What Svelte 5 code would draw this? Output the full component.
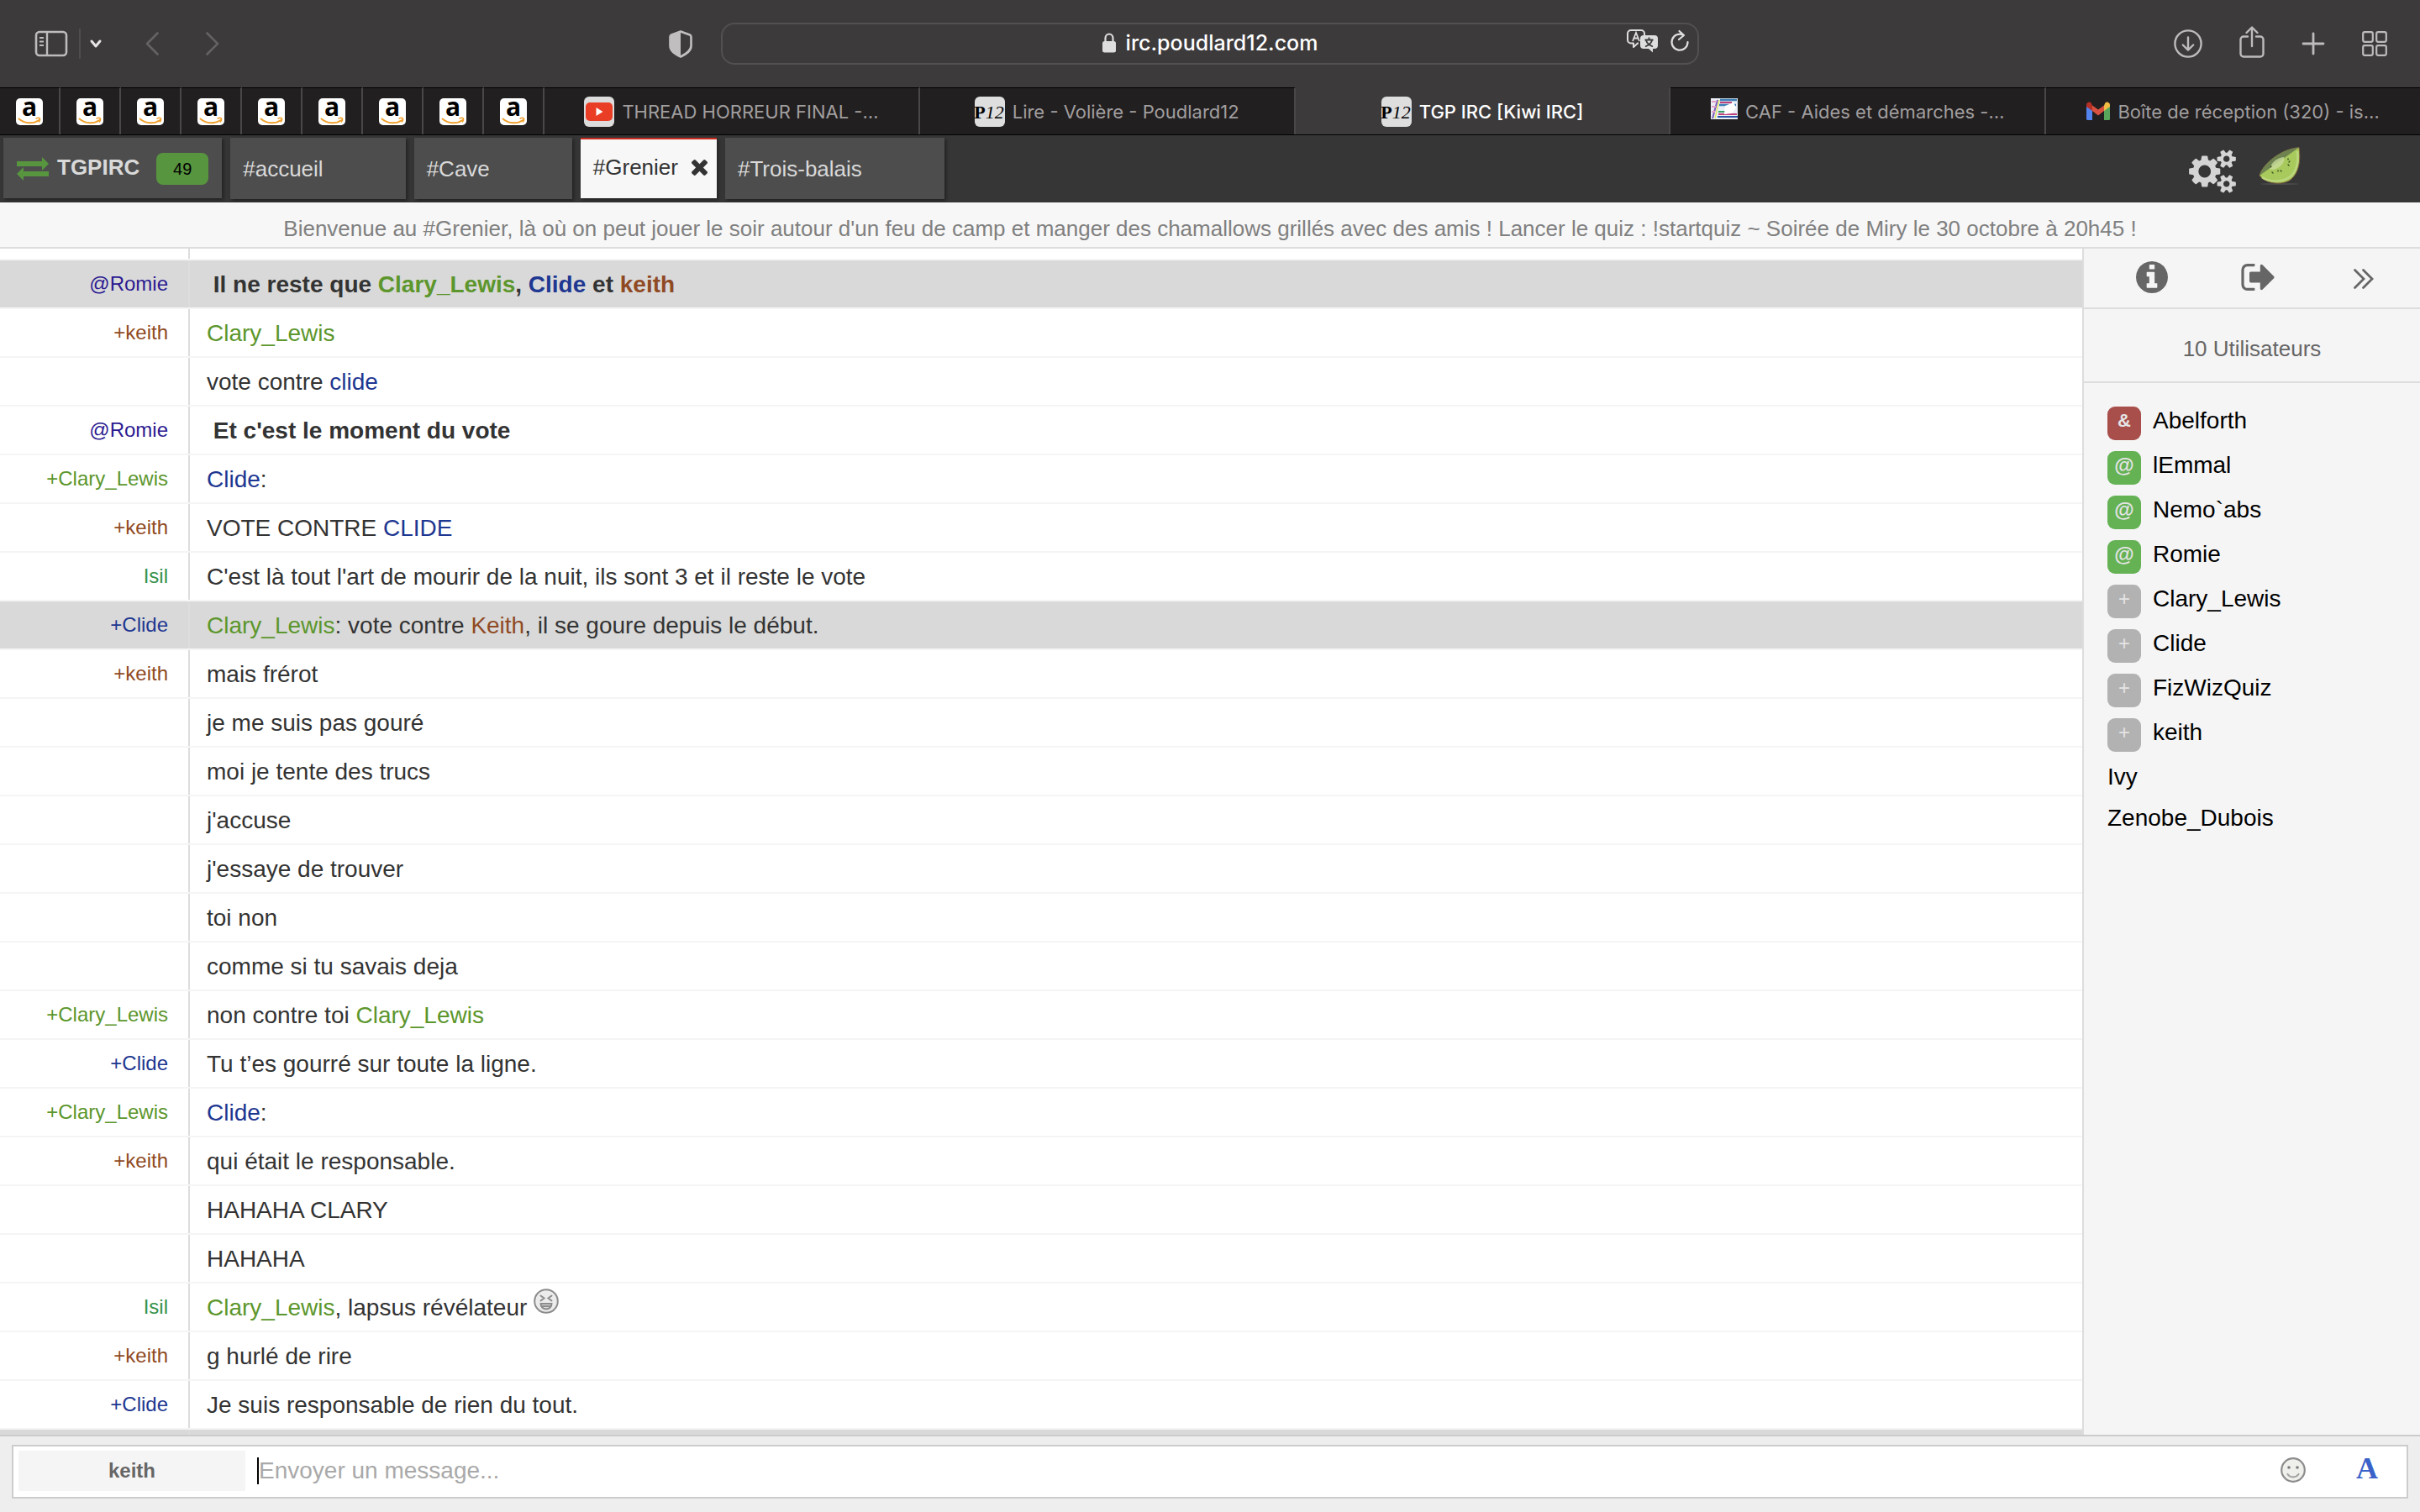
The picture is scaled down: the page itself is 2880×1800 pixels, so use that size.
<script>
  const pinned = Array.from({ length: 9 }, (_, i) => i);

  const browserTabs = [
    { icon: 'youtube', title: 'THREAD HORREUR FINAL -…' },
    { icon: 'p12', title: 'Lire - Volière - Poudlard12' },
    { icon: 'p12', title: 'TGP IRC [Kiwi IRC]', active: true },
    { icon: 'caf', title: 'CAF - Aides et démarches -…' },
    { icon: 'gmail', title: 'Boîte de réception (320) - is…' }
  ];

  const messages = [
    { nick: '@Romie', text: " Il ne reste que Clary_Lewis, Clide et keith", bold: true, highlight: true },
    { nick: '+keith', text: 'Clary_Lewis' },
    { text: 'vote contre clide' },
    { nick: '@Romie', text: " Et c'est le moment du vote", bold: true },
    { nick: '+Clary_Lewis', text: 'Clide:' },
    { nick: '+keith', text: 'VOTE CONTRE CLIDE' },
    { nick: 'Isil', text: "C'est là tout l'art de mourir de la nuit, ils sont 3 et il reste le vote" },
    { nick: '+Clide', text: 'Clary_Lewis: vote contre Keith, il se goure depuis le début.', highlight: true },
    { nick: '+keith', text: 'mais frérot' },
    { text: 'je me suis pas gouré' },
    { text: 'moi je tente des trucs' },
    { text: "j'accuse" },
    { text: "j'essaye de trouver" },
    { text: 'toi non' },
    { text: 'comme si tu savais deja' },
    { nick: '+Clary_Lewis', text: 'non contre toi Clary_Lewis' },
    { nick: '+Clide', text: 'Tu t’es gourré sur toute la ligne.' },
    { nick: '+Clary_Lewis', text: 'Clide:' },
    { nick: '+keith', text: 'qui était le responsable.' },
    { text: 'HAHAHA CLARY' },
    { text: 'HAHAHA' },
    { nick: 'Isil', text: 'Clary_Lewis, lapsus révélateur ', emoticon: true },
    { nick: '+keith', text: 'g hurlé de rire' },
    { nick: '+Clide', text: 'Je suis responsable de rien du tout.' }
  ];

  const users = [
    { name: 'Abelforth', mode: '&', type: 'admin' },
    { name: 'lEmmal', mode: '@', type: 'op' },
    { name: 'Nemo`abs', mode: '@', type: 'op' },
    { name: 'Romie', mode: '@', type: 'op' },
    { name: 'Clary_Lewis', mode: '+', type: 'voice' },
    { name: 'Clide', mode: '+', type: 'voice' },
    { name: 'FizWizQuiz', mode: '+', type: 'voice' },
    { name: 'keith', mode: '+', type: 'voice' },
    { name: 'Ivy' },
    { name: 'Zenobe_Dubois' }
  ];

  const nickPattern = /(clary_lewis|clide|keith)/i;

  // nick -> css class, without the mode prefix
  function nickClass(nick = '') {
    return 'n-' + nick.replace(/^[@+&]/, '').toLowerCase();
  }
</script>

<div class="app">
  <header class="toolbar">
    <div class="tools left">
      <button aria-label="Barre latérale">
        <svg width="38" height="30" viewBox="0 0 38 30" fill="none" stroke="#bdbbbc" stroke-width="2">
          <rect x="1" y="1" width="36" height="28" rx="4" stroke-width="2.6" />
          <path d="M14 1v28" stroke-width="2.4" />
          <path d="M5 8h5M5 12.500h5M5 17h5" />
        </svg>
      </button>
      <span class="sep"></span>
      <button class="chev" aria-label="Groupes d'onglets">
        <svg width="14" height="10" viewBox="0 0 14 10" fill="none" stroke="#e6e6e6" stroke-width="3" stroke-linecap="round" stroke-linejoin="round"><path d="M2 2l5 6 5-6" /></svg>
      </button>
      <button class="back" aria-label="Précédent">
        <svg width="16" height="28" viewBox="0 0 16 28" fill="none" stroke="#656263" stroke-width="2.600" stroke-linecap="round" stroke-linejoin="round"><path d="M14.500 1.500L2 14l12.500 12.500" /></svg>
      </button>
      <button aria-label="Suivant">
        <svg width="16" height="28" viewBox="0 0 16 28" fill="none" stroke="#656263" stroke-width="2.600" stroke-linecap="round" stroke-linejoin="round"><path d="M1.500 1.500L14 14 1.500 26.500" /></svg>
      </button>
      <button class="shield" aria-label="Confidentialité">
        <svg width="28" height="33" viewBox="0 0 28 33">
          <path d="M14 1.500L25 5.500q1.500.600 1.500 2.500v10.500c0 6-5.500 9.500-12.500 13-7-3.500-12.500-7-12.500-13V8q0-1.900 1.500-2.500z" fill="none" stroke="#c0bebf" stroke-width="2.600" stroke-linejoin="round" />
          <path d="M14 1L3 5Q1 6 1 8v10.500C1 25 7 28.500 14 32z" fill="#c0bebf" />
        </svg>
      </button>
    </div>

    <div class="address">
      <span class="pad"></span>
      <span class="url">
        <svg width="16" height="24" viewBox="0 0 16 24"><path d="M3.500 11V6.500a4.500 5 0 0 1 9 0V11" fill="none" stroke="#dedede" stroke-width="2.200" /><rect y="10" width="16" height="13.500" rx="2.500" fill="#dedede" /></svg>
        irc.poudlard12.com
      </span>
      <span class="page-tools">
        <button aria-label="Traduire">
          <svg width="38" height="28" viewBox="0 0 38 28">
            <path d="M14 16.500h-1l-5 4.500v-4.500H5a4 4 0 0 1-4-4V5a4 4 0 0 1 4-4h12a4 4 0 0 1 4 4v2" fill="none" stroke="#dedede" stroke-width="2" stroke-linejoin="round" />
            <path d="M7 14l4-10 4 10M8.500 10.500h5" fill="none" stroke="#dedede" stroke-width="1.800" />
            <path d="M20 7h13a4 4 0 0 1 4 4v8a4 4 0 0 1-4 4h-2v4.500L26 23h-6a4 4 0 0 1-4-4v-8a4 4 0 0 1 4-4z" fill="#dedede" />
            <path d="M26.500 9.500v2.500M21.500 12.500h10M30 13c-1 3.500-4 6-8 7.500M23 13c1 3.500 4 6 8 7.500" fill="none" stroke="#3d3a3b" stroke-width="1.800" />
          </svg>
        </button>
        <button aria-label="Actualiser">
          <svg width="22" height="28" viewBox="0 0 22 28" fill="none" stroke="#dedede" stroke-width="2.200" stroke-linecap="round" stroke-linejoin="round">
            <path d="M15.500 6.800A9.500 9.500 0 1 0 20.500 15M10.500 2l5.500 5-6 5" />
          </svg>
        </button>
      </span>
    </div>

    <div class="tools right">
      <button aria-label="Téléchargements">
        <svg width="34" height="34" viewBox="0 0 34 34" fill="none" stroke="#bdbbbc" stroke-width="2.400" stroke-linecap="round" stroke-linejoin="round"><circle cx="17" cy="17" r="15.600" /><path d="M17 9.500v15M10.800 18.500l6.200 6.200 6.200-6.200" /></svg>
      </button>
      <button class="share" aria-label="Partager">
        <svg width="30" height="38" viewBox="0 0 30 38" fill="none" stroke="#bdbbbc" stroke-width="2.400" stroke-linecap="round" stroke-linejoin="round"><path d="M10 12.500H5a3.500 3.500 0 0 0-3.500 3.500v17A3.500 3.500 0 0 0 5 36.500h20a3.500 3.500 0 0 0 3.500-3.500V16a3.500 3.500 0 0 0-3.500-3.500h-5M15 24V2M8.500 8L15 1.500 21.500 8" /></svg>
      </button>
      <button aria-label="Nouvel onglet">
        <svg width="28" height="28" viewBox="0 0 28 28" stroke="#bdbbbc" stroke-width="2.800" stroke-linecap="round"><path d="M14 2v24M2 14h24" /></svg>
      </button>
      <button aria-label="Vue d'ensemble">
        <svg width="30" height="30" viewBox="0 0 30 30" fill="none" stroke="#bdbbbc" stroke-width="2.200"><rect x="1.200" y="1.200" width="11.600" height="11.600" rx="2" /><rect x="17.200" y="1.200" width="11.600" height="11.600" rx="2" /><rect x="1.200" y="17.200" width="11.600" height="11.600" rx="2" /><rect x="17.200" y="17.200" width="11.600" height="11.600" rx="2" /></svg>
      </button>
    </div>
  </header>

  <nav class="browser-tabs">
    {#each pinned as p (p)}
      <a class="pin" href="#amazon" aria-label="Amazon">
        <svg width="32" height="32" viewBox="0 0 32 32">
          <rect width="32" height="32" rx="5" fill="#fff" />
          <text x="16" y="21" text-anchor="middle" class="fav-a">a</text>
          <path d="M3.500 24.500c7 6 17 6.300 24 1.500" fill="none" stroke="#f0a02c" stroke-width="2" stroke-linecap="round" />
          <path d="M23.500 24.300c2-1 4-1 4.800-.500.500 1 0 3.200-1.400 4.700" fill="none" stroke="#f0a02c" stroke-width="1.500" />
        </svg>
      </a>
    {/each}
    {#each browserTabs as tab}
      <a class="tab" class:active={tab.active} href="#tab">
        {#if tab.icon === 'youtube'}
          <svg width="36" height="36" viewBox="0 0 36 36"><rect width="36" height="36" rx="6" fill="#dcdcdc" /><rect x="2" y="7" width="32" height="22" rx="5" fill="#ea3d25" /><path d="M14.500 13v10l8-5z" fill="#fff" /></svg>
        {:else if tab.icon === 'p12'}
          <svg width="36" height="36" viewBox="0 0 36 36"><rect width="36" height="36" rx="6" fill="#dedede" /><text x="17" y="26" text-anchor="middle" class="fav-p"><tspan class="fav-bold">P</tspan><tspan class="fav-it">12</tspan></text></svg>
        {:else if tab.icon === 'caf'}
          <svg class="caf" width="32" height="25" viewBox="0 0 32 25">
            <rect width="32" height="25" fill="#e9eef6" />
            <path d="M11 2h20M10 8h20" stroke="#3c7fb8" stroke-width="2.500" />
            <path d="M11 5h14M9 19h22" stroke="#c2407c" stroke-width="2" />
            <path d="M8 22h24" stroke="#2b55a4" stroke-width="2" />
            <path d="M9 16h9" stroke="#3aa06a" stroke-width="2" />
            <path d="M2 24L8 2" stroke="#7a5bb8" stroke-width="2" />
            <path d="M1 4h6M1 10h5M1 16h4" stroke="#e5a0c8" stroke-width="2" />
            <path d="M5 24l5-22" stroke="#dfe86a" stroke-width="1.500" />
            <path d="M17 9l10-4 3 6-5 7-9 1z" fill="#fff" />
          </svg>
        {:else}
          <svg width="28" height="23" viewBox="1 0 28 23">
            <path d="M1 4v16.500Q1 22 2.500 22H8V9.500z" fill="#5383ec" />
            <path d="M29 4v16.500q0 1.500-1.500 1.500H22V9.500z" fill="#58a55c" />
            <path d="M22 4.500V11l7-5V4c0-3-3.500-4.500-5.500-2.800z" fill="#f2bd42" />
            <path d="M8 11V4.500l7 5 7-5V11l-7 5.500z" fill="#d95140" />
            <path d="M8 4.500V11L1 6V4c0-3 3.500-4.500 5.500-2.800z" fill="#b43025" />
          </svg>
        {/if}
        <span>{tab.title}</span>
      </a>
    {/each}
  </nav>

  <div class="channels">
    <a class="channel server" href="#server">
      <svg width="38" height="28" viewBox="0 0 38 28" fill="#58953f"><path d="M0 5h30V0l8 8-8 8v-5H0zM38 17H8v-5l-8 8 8 8v-5h30z" /></svg>
      <b>TGPIRC</b>
      <span class="count">49</span>
    </a>
    <a class="channel" href="#accueil">#accueil</a>
    <a class="channel" href="#Cave">#Cave</a>
    <div class="channel current">
      <a href="#Grenier">#Grenier</a>
      <button aria-label="Fermer">
        <svg width="19" height="19" viewBox="302 302 1188 1188" fill="#333"><path d="M1490 1258q0 40-28 68l-136 136q-28 28-68 28t-68-28l-294-294-294 294q-28 28-68 28t-68-28l-136-136q-28-28-28-68t28-68l294-294-294-294q-28-28-28-68t28-68l136-136q28-28 68-28t68 28l294 294 294-294q28-28 68-28t68 28l136 136q28 28 28 68t-28 68l-294 294 294 294q28 28 28 68z" /></svg>
      </button>
    </div>
    <a class="channel" href="#Trois-balais">#Trois-balais</a>

    <div class="app-tools">
      <button aria-label="Paramètres">
        <svg width="56" height="52" viewBox="0 0 1920 1792" fill="#d4d4d4"><path d="M896 896q0-106-75-181t-181-75-181 75-75 181 75 181 181 75 181-75 75-181zm768 512q0-52-38-90t-90-38-90 38-38 90q0 53 37.500 90.500t90.500 37.500 90.500-37.500 37.500-90.500zm0-1024q0-52-38-90t-90-38-90 38-38 90q0 53 37.500 90.500t90.500 37.500 90.500-37.500 37.500-90.500zm-384 421v185q0 10-7 19.500t-16 10.500l-155 24q-11 35-32 76 34 48 90 115 7 11 7 20 0 12-7 19-23 30-82.500 89.500t-78.500 59.500q-11 0-21-7l-115-90q-37 19-77 31-11 108-23 155-7 24-30 24h-186q-11 0-20-7.500t-10-17.500l-23-153q-34-10-75-31l-118 89q-7 7-20 7-11 0-21-8-144-133-144-160 0-9 7-19 10-14 41-53t47-61q-23-44-35-82l-152-24q-10-1-17-9.500t-7-19.500v-185q0-10 7-19.500t16-10.500l155-24q11-35 32-76-34-48-90-115-7-11-7-20 0-12 7-20 22-30 82-89t79-59q11 0 21 7l115 90q34-18 77-32 11-108 23-154 7-24 30-24h186q11 0 20 7.500t10 17.500l23 153q34 10 75 31l118-89q8-7 20-7 11 0 21 8 144 133 144 160 0 8-7 19-12 16-42 54t-45 60q23 48 34 82l152 23q10 2 17 10.500t7 19.500zm640 533v140q0 16-149 31-12 27-30 52 51 113 51 138 0 4-4 7-122 71-124 71-8 0-46-47t-52-68q-20 2-30 2t-30-2q-14 21-52 68t-46 47q-2 0-124-71-4-3-4-7 0-25 51-138-18-25-30-52-149-15-149-31v-140q0-16 149-31 13-29 30-52-51-113-51-138 0-4 4-7 4-2 35-20t59-34 30-16q8 0 46 46.500t52 67.500q20-2 30-2t30 2q51-71 92-112l6-2q4 0 124 70 4 3 4 7 0 25-51 138 17 23 30 52 149 15 149 31zm0-1024v140q0 16-149 31-12 27-30 52 51 113 51 138 0 4-4 7-122 71-124 71-8 0-46-47t-52-68q-20 2-30 2t-30-2q-14 21-52 68t-46 47q-2 0-124-71-4-3-4-7 0-25 51-138-18-25-30-52-149-15-149-31v-140q0-16 149-31 13-29 30-52-51-113-51-138 0-4 4-7 4-2 35-20t59-34 30-16q8 0 46 46.500t52 67.500q20-2 30-2t30 2q51-71 92-112l6-2q4 0 124 70 4 3 4 7 0 25-51 138 17 23 30 52 149 15 149 31z" /></svg>
      </button>
      <a class="kiwi" href="#kiwi" aria-label="Kiwi IRC">
        <svg width="50" height="46" viewBox="0 0 50 46">
          <ellipse cx="25" cy="44" rx="23" ry="1" fill="#4c4c4c" />
          <path d="M1 34C4 22 24 3 48 .500 50 14 49 30 38 39 28 46 8 44 1 34z" fill="#a8c95c" stroke="#7a5c3a" stroke-width="1" />
          <path d="M46 5c1.500 12 0 24-9.500 31C28 42 12 42 4 36" fill="none" stroke="#bcd87f" stroke-width="2.500" />
          <path d="M1 34C4 22 24 3 48 .500z" fill="#6e8250" />
          <path d="M13 26c2-7 8-13 17-14 2 6-4 13-13 15z" fill="#c9dc9c" opacity=".8" />
          <path d="M35 14v1M36 18l1-1M35 21l1 1M16 30l1 1M23 28v1M26 28l1 1M14 24l1-1" stroke="#3f5426" stroke-width="1.400" stroke-linecap="round" />
        </svg>
      </a>
    </div>
  </div>

  <div class="topic">Bienvenue au #Grenier, là où on peut jouer le soir autour d'un feu de camp et manger des chamallows grillés avec des amis ! Lancer le quiz : !startquiz ~ Soirée de Miry le 30 octobre à 20h45 !</div>

  <main>
    <div class="log" role="log">
      <div class="msg previous"><div class="nick"></div><div class="text"></div></div>
      {#each messages as msg}
        <div class="msg" class:highlight={msg.highlight}>
          <div class="nick {nickClass(msg.nick)}">{msg.nick ?? ''}</div>
          <div class="text" class:bold={msg.bold}>{#each msg.text.split(nickPattern) as part, i}{#if i % 2}<span class={nickClass(part)}>{part}</span>{:else}{part}{/if}{/each}{#if msg.emoticon}<svg class="emo" width="30" height="30" viewBox="0 0 30 30" fill="none" stroke="#8c8c8c" stroke-width="2" stroke-linecap="round"><circle cx="15" cy="15" r="13.800" fill="#ececec" /><path d="M8.500 8.500l4 3-4 3M21.500 8.500l-4 3 4 3" /><path d="M8.500 18h13c0 4-3 6.500-6.500 6.500S8.500 22 8.500 18zM9.500 21h11" fill="#ddd" /></svg>{/if}</div>
        </div>
      {/each}
      <div class="msg highlight"><div class="nick"></div><div class="text"></div></div>
    </div>

    <aside>
      <div class="panel-tools">
        <button aria-label="Informations">
          <svg width="38" height="38" viewBox="128 128 1536 1536" fill="#666"><path d="M1152 1376v-160q0-14-9-23t-23-9h-96v-512q0-14-9-23t-23-9h-320q-14 0-23 9t-9 23v160q0 14 9 23t23 9h96v320h-96q-14 0-23 9t-9 23v160q0 14 9 23t23 9h448q14 0 23-9t9-23zm-128-896v-160q0-14-9-23t-23-9h-192q-14 0-23 9t-9 23v160q0 14 9 23t23 9h192q14 0 23-9t9-23zm640 416q0 209-103 385.500t-279.500 279.500-385.500 103-385.500-103-279.500-279.500-103-385.500 103-385.500 279.500-279.500 385.500-103 385.500 103 279.500 279.500 103 385.500z" /></svg>
        </button>
        <button aria-label="Quitter">
          <svg width="40" height="32" viewBox="64 256 1568 1280" fill="#666"><path d="M704 1440q0 4 1 20t.5 26.500-3 23.500-10 19.500-20.500 6.500h-320q-119 0-203.500-84.500t-84.500-203.500v-704q0-119 84.500-203.500t203.500-84.500h320q13 0 22.500 9.500t9.500 22.500q0 4 1 20t.5 26.500-3 23.500-10 19.500-20.500 6.500h-320q-66 0-113 47t-47 113v704q0 66 47 113t113 47h312l11.500 1 11.500 3 8 5.500 7 9 2 13.500zm928-544q0 26-19 45l-544 544q-19 19-45 19t-45-19-19-45v-288h-448q-26 0-45-19t-19-45v-384q0-26 19-45t45-19h448v-288q0-26 19-45t45-19 45 19l544 544q19 19 19 45z" /></svg>
        </button>
        <button class="hide" aria-label="Masquer">
          <svg width="24" height="26" viewBox="0 0 24 26" fill="none" stroke="#666" stroke-width="2.800" stroke-linecap="round"><path d="M1.500 2.500L12 13 1.500 23.500M11.500 2.500L22 13 11.500 23.500" /></svg>
        </button>
      </div>
      <div class="total">10 Utilisateurs</div>
      <ul>
        {#each users as user}
          <li class:plain={!user.mode}>
            {#if user.mode}<span class="mode {user.type}">{user.mode}</span>{/if}
            <a href="#user">{user.name}</a>
          </li>
        {/each}
      </ul>
    </aside>
  </main>

  <footer>
    <div class="box">
      <button class="me">keith</button>
      <span class="caret"></span>
      <input type="text" aria-label="Message" placeholder="Envoyer un message..." />
      <button class="smile" aria-label="Émoticônes">
        <svg width="30" height="30" viewBox="0 0 30 30" fill="none" stroke="#8c8c8c" stroke-width="2.200" stroke-linecap="round"><circle cx="15" cy="15" r="13.800" fill="#efefec" /><path d="M8.500 20c3 4.500 10 4.500 13 0" stroke="#a5a5a5" /><path d="M8.500 10.500h3v3h-3zM18.500 10.500h3v3h-3z" fill="#777" stroke="none" /></svg>
      </button>
      <button class="format" aria-label="Mise en forme">A</button>
    </div>
  </footer>
</div>

<style>
  :global(body) {
    margin: 0;
  }

  .app {
    height: 100vh;
    display: flex;
    flex-direction: column;
    font-family: "Liberation Sans", Arial, sans-serif;
    font-size: 28px;
    color: #333;
    background: #fff;
    overflow: hidden;
  }

  .app * { box-sizing: border-box; }

  svg { display: block; flex: none; overflow: visible; }

  button {
    padding: 0;
    border: 0;
    background: none;
    font-family: inherit;
    color: inherit;
    cursor: pointer;
  }

  a { color: inherit; text-decoration: none; }

  /* browser chrome */
  .toolbar {
    flex: none;
    height: 104px;
    display: grid;
    grid-template-columns: 1fr minmax(0, 1164px) 1fr;
    align-items: center;
    background: #3d3a3b;
    font-family: Inter, sans-serif;
  }

  .tools { display: flex; align-items: center; }
  .left { padding: 0 34px 0 42px; }
  .right { justify-content: flex-end; gap: 44px; padding-right: 39px; }
  .share { padding-bottom: 4px; }
  .sep { width: 2px; height: 36px; margin: 0 11px 0 14px; background: #504d4e; }
  .back { margin: 0 56px 0 52px; }
  .shield { margin-left: auto; }

  .address {
    height: 50px;
    display: flex;
    align-items: center;
    justify-content: space-between;
    border: 2px solid #525051;
    border-radius: 16px;
    padding: 0 10px 2px;
  }

  .pad, .page-tools { width: 80px; }
  .page-tools { display: flex; justify-content: flex-end; gap: 14px; padding-bottom: 4px; }

  .url {
    display: flex;
    align-items: center;
    gap: 12px;
    font-size: 25px;
    font-weight: 500;
    color: #fff;
  }

  .browser-tabs {
    flex: none;
    height: 57px;
    display: flex;
    background: #221f20;
    border-bottom: 1px solid #000;
    font-family: Inter, sans-serif;
    font-size: 22px;
    color: #a09e9f;
  }

  .pin, .tab {
    display: flex;
    align-items: center;
    justify-content: center;
    border-top: 1px solid #000;
    border-right: 2px solid #4a4748;
  }

  .pin { width: 72px; flex: none; }
  .tab { flex: 1; gap: 9px; min-width: 0; white-space: nowrap; }
  .tab:last-child { border-right: 0; }
  .tab.active { background: #3d3a3b; border-top-color: #3d3a3b; color: #fff; font-weight: 500; }
  .caf { margin-bottom: 6px; }

  .fav-a { font: bold 30px "Open Sans", sans-serif; }
  .fav-p { font: 22px "Liberation Serif", serif; }
  .fav-bold { font-weight: bold; }
  .fav-it { font-style: italic; }

  /* channel tabs */
  .channels {
    flex: none;
    height: 80px;
    display: flex;
    align-items: flex-start;
    gap: 10px;
    padding: 3px 142px 0 4px;
    background: #363636;
    font-size: 26px;
    color: #d9d9d9;
  }

  .channel {
    height: 73px;
    display: flex;
    align-items: center;
    padding: 2px 98px 0 15px;
    background: #4d4d4d;
    box-shadow: 2px 2px 4px rgba(0, 0, 0, .4);
    white-space: nowrap;
  }

  .channel.server { height: 72px; padding: 2px 16px 0; gap: 10px; }
  .server b { padding-bottom: 4px; }

  .count {
    width: 62px;
    margin-left: 10px;
    line-height: 38px;
    border-radius: 8px;
    background: #58953f;
    color: #000;
    font-size: 20px;
    text-align: center;
  }

  .channel.current {
    height: 72px;
    gap: 16px;
    padding: 0 11px 3px 15px;
    border-top: 2px solid #cc2b20;
    background: #f7f7f7;
    color: #333;
  }

  .app-tools {
    margin-left: auto;
    display: flex;
    align-items: flex-start;
    gap: 27px;
    padding-top: 11px;
  }

  .app-tools button { padding-top: 3px; }

  .topic {
    flex: none;
    height: 55px;
    padding-top: 2px;
    line-height: 58px;
    text-align: center;
    font-size: 26px;
    color: #808080;
    background: #f7f7f7;
    border-bottom: 2px solid #ddd;
    white-space: nowrap;
  }

  main { flex: 1; min-height: 0; display: flex; }

  /* messages */
  .log { flex: 1; min-width: 0; overflow: hidden; }

  .msg {
    height: 58px;
    display: flex;
    border-bottom: 2px solid #f5f5f5;
    line-height: 56px;
  }

  .msg.previous { height: 14px; }
  .highlight { background: #d9d9d9; }

  .nick {
    flex: none;
    width: 226px;
    padding-right: 24px;
    border-right: 2px solid #ddd;
    text-align: right;
    font-size: 24px;
  }

  .text {
    padding: 2px 0 0 20px;
    line-height: 54px;
    white-space: pre;
  }

  .bold { font-weight: bold; }
  .emo { display: inline-block; vertical-align: 2px; }

  .n-romie { color: #2b1a91; }
  .n-keith { color: #8f4a24; }
  .n-clary_lewis { color: #5c962c; }
  .n-clide { color: #1e3791; }
  .n-isil { color: #37934a; }

  /* nick list */
  aside {
    flex: none;
    width: 402px;
    border-left: 2px solid #ddd;
    background: #f5f5f5;
    color: #000;
  }

  .panel-tools {
    height: 72px;
    display: grid;
    grid-template-columns: repeat(3, 1fr);
    align-items: center;
    justify-items: center;
    padding: 0 4px 2px 18px;
    border-bottom: 2px solid #ddd;
  }

  .hide { padding-top: 4px; }

  .total {
    height: 88px;
    padding-top: 5px;
    line-height: 84px;
    border-bottom: 2px solid #ddd;
    text-align: center;
    font-size: 26px;
    color: #666;
  }

  ul { list-style: none; margin: 0; padding: 28px 28px 0; }

  li {
    display: flex;
    gap: 14px;
    height: 53px;
    line-height: 34px;
  }

  li.plain { height: 49px; }

  .mode {
    width: 40px;
    height: 40px;
    border-radius: 9px;
    color: #e4e4e4;
    font-size: 24px;
    text-align: center;
  }

  .admin { background: #a84e4b; font-size: 22px; font-weight: bold; }
  .op { background: #65b255; font-weight: bold; }
  .voice { background: #b2b2b2; }

  /* input bar */
  footer {
    flex: none;
    height: 92px;
    padding: 10px 14px 16px;
    border-top: 2px solid #ccc;
    background: #eee;
  }

  .box {
    height: 64px;
    display: flex;
    align-items: center;
    padding: 0 34px 2px 6px;
    border: 2px solid #ccc;
    background: #fff;
  }

  .me {
    width: 270px;
    height: 48px;
    background: #f5f5f5;
    color: #666;
    font-size: 24px;
    font-weight: bold;
  }

  .caret { width: 2px; height: 32px; margin-left: 14px; background: #000; }

  input {
    flex: 1;
    min-width: 0;
    padding: 0;
    border: 0;
    outline: 0;
    font: 28px "Liberation Sans", Arial, sans-serif;
    background: none;
  }

  input::placeholder { color: #a9a9a9; opacity: 1; }

  .smile { margin-right: 60px; padding-bottom: 2px; }

  .format {
    font-family: "Liberation Serif", "Times New Roman", serif;
    font-size: 36px;
    font-weight: bold;
    line-height: 40px;
    color: #3a62c8;
    padding-bottom: 6px;
  }
</style>
